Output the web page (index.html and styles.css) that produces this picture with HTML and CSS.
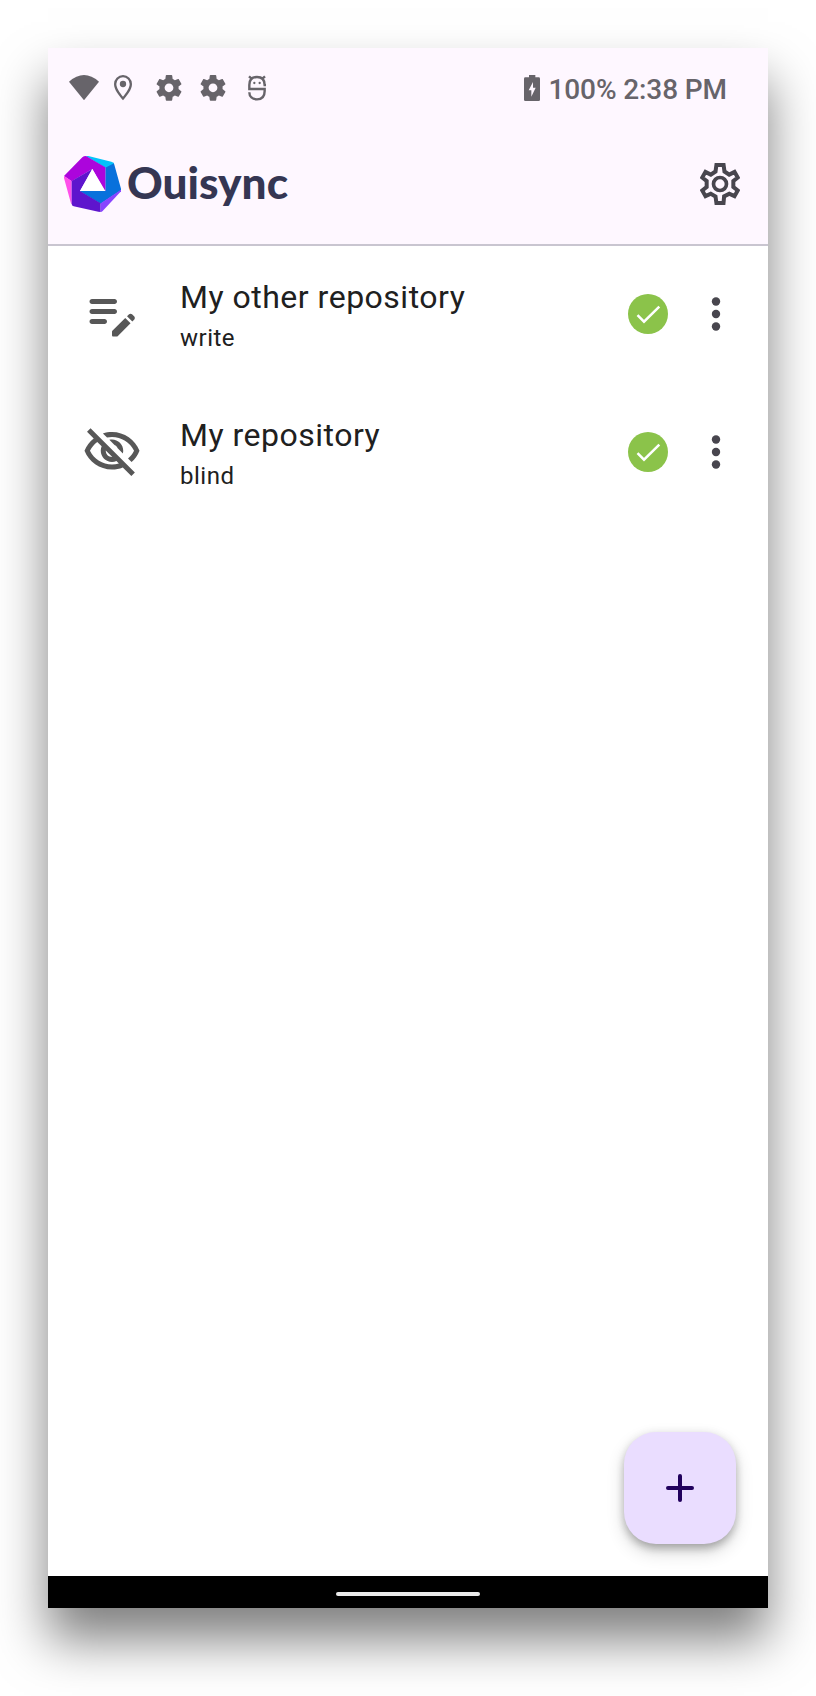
FILE: index.html
```html
<!DOCTYPE html>
<html lang="en">
<head>
<meta charset="utf-8">
<title>Ouisync</title>
<link rel="stylesheet" href="styles.css">
</head>
<body>
<main class="phone">
  <header class="header">
    <div class="status-bar">
      <svg class="status-icons" viewBox="84 102 600 84" aria-hidden="true">
        <path d="M132 181 87 125Q132 85 177 125Z"/>
        <path fill-rule="evenodd" d="M249 105a27 27 0 0 0-27 27c0 17 15 35 27 49 12-14 27-32 27-49a27 27 0 0 0-27-27zm0 7a20 20 0 0 1 20 20c0 12-10 26-20 38-10-12-20-26-20-38a20 20 0 0 1 20-20z"/>
        <circle cx="249" cy="132" r="9.5"/>
        <g id="cog" transform="translate(387 143.500) scale(4) translate(-12 -12)">
          <path d="M19.14 12.94c.04-.3.06-.61.06-.94 0-.32-.02-.64-.07-.94l2.03-1.58c.18-.14.23-.41.12-.61l-1.92-3.32c-.12-.22-.37-.29-.59-.22l-2.39.96c-.5-.38-1.03-.7-1.62-.94l-.36-2.54c-.04-.24-.24-.41-.48-.41h-3.840c-.24 0-.43.17-.47.41l-.36 2.540c-.59.24-1.130.57-1.620.940l-2.390-.960c-.22-.08-.47 0-.59.22L2.740 8.870c-.12.21-.08.47.12.61l2.030 1.580c-.05.3-.09.63-.09.940s.02.64.07.940l-2.030 1.580c-.18.14-.23.41-.12.61l1.920 3.320c.12.22.37.29.59.22l2.390-.960c.5.38 1.030.7 1.620.940l.36 2.540c.05.24.24.41.48.41h3.840c.24 0 .44-.17.47-.41l.36-2.540c.59-.24 1.130-.56 1.620-.940l2.390.960c.22.08.47 0 .59-.22l1.920-3.320c.12-.22.07-.47-.12-.61l-2.010-1.580zM12 15.300c-1.820 0-3.300-1.480-3.300-3.300s1.480-3.300 3.300-3.300 3.300 1.480 3.300 3.300-1.480 3.300-3.300 3.300z"/>
        </g>
        <use href="#cog" x="132"/>
        <g fill="none" stroke="#67646a" stroke-width="7.200">
          <path d="M678 135.500H674C674 119 666 111 651 111S628 119 628 135V147H674V153C674 170 665 178 651 178 637 178 628 170 628 157M635 116 627 109M667 116 675 109"/>
        </g>
        <circle cx="643" cy="129" r="3.500"/><circle cx="659" cy="129" r="3.500"/>
      </svg>
      <div class="status-right">
        <svg class="battery" viewBox="75 45 48 78" aria-hidden="true"><path fill-rule="evenodd" d="M90 45H109V52H119Q123 52 123 56V119Q123 123 119 123H79Q75 123 75 119V56Q75 52 79 52H90ZM102 66 89 91H97V110L110 83H102Z"/></svg>
        <span>100% 2:38 PM</span>
      </div>
    </div>
    <div class="app-bar">
      <div class="brand">
        <svg class="mark" viewBox="42 48 171 168" aria-hidden="true">
          <path fill="#0871dc" d="M166 81 190 68Q192 70 193 74L213 146V151L152 191 88 153H166Z"/>
          <path fill="#03c3fa" d="M107 48H115L184 65Q190 67 192 70L166 83Z"/>
          <path fill="#ac05dc" d="M42 108 97 52Q101 48 108 48L166 82V153H164L127 87 65 124Z"/>
          <path fill="#ff4fea" d="M42 108 65 123V193Q63 191 62 187L42 114Z"/>
          <path fill="#5e15cd" d="M65 123 127 87 90 153 152 190V216L145 215 71 199Q65 197 65 191Z"/>
          <path fill="#8844ff" d="M152 190 213 149V154L158 213Q155 216 152 216Z"/>
          <path fill="#fff" d="M127 87 166 153H90Z"/>
        </svg>
        <svg class="wordmark" viewBox="0 0 164 60" role="img" aria-label="Ouisync"><text x="0" y="44.500" textLength="161" lengthAdjust="spacingAndGlyphs">Ouisync</text></svg>
      </div>
      <svg class="settings" viewBox="600 309 120 126" aria-hidden="true">
        <defs><clipPath id="gear-edge"><path id="gear" d="M644 309H676L679 331 688 337 706 328 721 354 706 366V378L721 390 706 416 688 408 678 413 676 435H644L641 413 632 408 614 416 599 390 614 378V366L599 354 614 328 632 337 641 331Z"/></clipPath></defs>
        <use href="#gear" class="gear-line" clip-path="url(#gear-edge)"/>
        <circle cx="660" cy="372" r="19.500" class="gear-ring"/>
      </svg>
    </div>
  </header>
  <section class="content">
    <article class="repo">
      <svg class="repo-icon" viewBox="0 0 24 24" aria-hidden="true"><path d="M14 11c0 .55-.45 1-1 1H4c-.55 0-1-.45-1-1s.45-1 1-1h9c.55 0 1 .45 1 1zM3 7c0 .55.45 1 1 1h9c.55 0 1-.45 1-1s-.45-1-1-1H4c-.55 0-1 .45-1 1zm7 8c0-.55-.45-1-1-1H4c-.55 0-1 .45-1 1s.45 1 1 1h5c.55 0 1-.45 1-1zm8.010-2.130l.71-.71c.39-.39 1.020-.39 1.410 0l.71.71c.39.39.39 1.020 0 1.410l-.71.71-2.120-2.120zm-.71.71l-5.160 5.160c-.09.09-.14.21-.14.35v1.410c0 .28.22.5.5.5h1.410c.13 0 .26-.05.35-.15l5.160-5.160-2.120-2.110z"/></svg>
      <div class="repo-text"><h2>My other repository</h2><p>write</p></div>
      <svg class="check" viewBox="0 0 40 40" aria-hidden="true"><circle cx="20" cy="20" r="20"/><path d="M9.500 21.200 16 27.700 31.300 12.700"/></svg>
      <svg class="more" viewBox="0 0 10 34" aria-hidden="true"><circle cx="5" cy="4.500" r="4.200"/><circle cx="5" cy="17" r="4.200"/><circle cx="5" cy="29.500" r="4.200"/></svg>
    </article>
    <article class="repo">
      <svg class="repo-icon" viewBox="0 0 24 24" aria-hidden="true"><path d="M12 6c3.790 0 7.170 2.130 8.820 5.500-.59 1.220-1.420 2.270-2.410 3.120l1.410 1.410c1.390-1.230 2.490-2.770 3.180-4.530C21.270 7.110 17 4 12 4c-1.270 0-2.490.2-3.640.57l1.650 1.650C10.660 6.090 11.320 6 12 6zm-1.070 1.140L13 9.210c.57.25 1.030.71 1.280 1.280l2.070 2.070c.08-.34.14-.7.14-1.070C16.500 9.010 14.480 7 12 7c-.37 0-.72.05-1.070.14zM2.010 3.870l2.680 2.680C3.060 7.830 1.770 9.530 1 11.500 2.730 15.890 7 19 12 19c1.520 0 2.980-.29 4.320-.82l3.420 3.420 1.410-1.410L3.420 2.450 2.010 3.870zm7.500 7.500l2.610 2.610c-.04.01-.08.02-.12.02-1.380 0-2.500-1.120-2.500-2.500 0-.05.01-.08.01-.13zm-3.400-3.400l1.750 1.750c-.23.55-.36 1.150-.36 1.780 0 2.480 2.020 4.500 4.500 4.500.63 0 1.230-.13 1.770-.36l.98.98c-.88.24-1.800.38-2.750.38-3.790 0-7.170-2.130-8.820-5.500.7-1.430 1.720-2.610 2.930-3.530z"/></svg>
      <div class="repo-text"><h2>My repository</h2><p>blind</p></div>
      <svg class="check" viewBox="0 0 40 40" aria-hidden="true"><circle cx="20" cy="20" r="20"/><path d="M9.500 21.200 16 27.700 31.300 12.700"/></svg>
      <svg class="more" viewBox="0 0 10 34" aria-hidden="true"><circle cx="5" cy="4.500" r="4.200"/><circle cx="5" cy="17" r="4.200"/><circle cx="5" cy="29.500" r="4.200"/></svg>
    </article>
    <button class="fab" aria-label="Add repository"><svg viewBox="0 0 28 28" aria-hidden="true"><path d="M14 2V26M2 14H26"/></svg></button>
  </section>
  <footer class="nav-bar"><div class="nav-handle"></div></footer>
</main>
</body>
</html>
```
FILE: styles.css
```css
* { box-sizing: border-box; }
body { margin: 0; padding: 48px 48px 88px; background: #fff; font-family: Roboto, sans-serif; }
svg { display: block; flex: none; }
.phone { display: flex; flex-direction: column; width: 720px; height: 1560px; background: #fff; box-shadow: 0 32px 48px rgba(0, 0, 0, .5); }
.header { height: 198px; background: #fef7ff; border-bottom: 2px solid #c9c5d0; }
.status-bar { display: flex; justify-content: space-between; align-items: center; height: 80px; padding: 0 41px 0 20px; color: #67646a; }
.status-icons { width: 200px; height: 28px; fill: #67646a; }
.status-right { display: flex; align-items: center; gap: 8px; font-size: 28px; font-weight: 500; line-height: 34px; letter-spacing: -.1px; }
.status-right span { padding-top: 4px; }
.battery { width: 16px; height: 26px; fill: #67646a; }
.app-bar { display: flex; justify-content: space-between; align-items: center; height: 112px; padding: 0 28px 0 16px; }
.brand { display: flex; align-items: center; gap: 6px; }
.mark { width: 57px; height: 56px; }
.wordmark { width: 164px; height: 60px; overflow: visible; }
.wordmark text { font: 900 44px Lato, sans-serif; fill: #353653; }
.settings { width: 40px; height: 42px; }
.gear-line { fill: none; stroke: #48464e; stroke-width: 24; }
.gear-ring { fill: none; stroke: #48464e; stroke-width: 11; }
.content { display: flex; flex-direction: column; flex: 1; }
.repo { display: flex; align-items: center; height: 138px; padding: 0 47px 2px 34px; }
.repo-icon { width: 60px; height: 60px; fill: #575757; }
.repo-text { flex: 1; margin-left: 38px; padding-top: 4px; color: #202020; }
.repo-text h2 { margin: 0; font-size: 32px; font-weight: 400; line-height: 44px; letter-spacing: .5px; }
.repo-text p { margin: 0; font-size: 24px; line-height: 38px; letter-spacing: .5px; }
.check { width: 40px; height: 40px; margin-right: 43px; fill: #8bc34a; }
.check path { fill: none; stroke: #fff; stroke-width: 2.5; }
.more { width: 10px; height: 34px; fill: #48464e; }
.fab { display: grid; place-items: center; align-self: flex-end; width: 112px; height: 112px; margin: auto 32px 32px 0; padding: 0; border: 0; border-radius: 32px; background: #eaddff; box-shadow: 0 6px 10px -2px rgba(0, 0, 0, .2), 0 8px 18px rgba(0, 0, 0, .16), 0 2px 10px rgba(0, 0, 0, .12); }
.fab svg { width: 28px; height: 28px; fill: none; stroke: #21005d; stroke-width: 4; stroke-linecap: round; }
.nav-bar { display: flex; align-items: center; justify-content: center; height: 32px; padding-top: 4px; background: #000; }
.nav-handle { width: 144px; height: 4px; border-radius: 2px; background: #ebebeb; }
```
